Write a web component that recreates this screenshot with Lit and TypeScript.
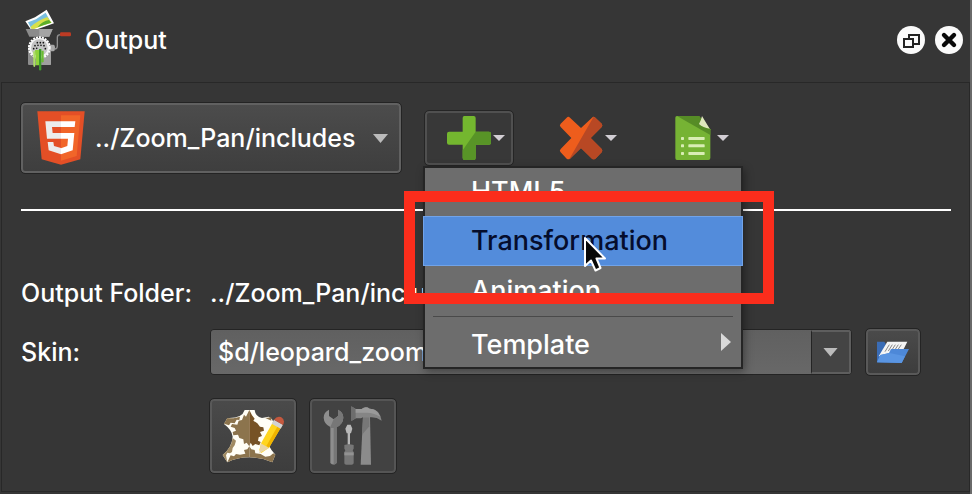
import { LitElement, html, css } from "lit";
import { customElement, property, state } from "lit/decorators.js";

const grinderIcon = html`<svg class="icon" width="48" height="64" viewBox="72 24 144 192" aria-hidden="true">
  <path d="M76 64 L105 52 L140 29 L162 70 L133 80 L96 93 Z" fill="#fff"/>
  <path d="M84 67 L108 58 L137 38 L150 62 L122 76 L94 86 Z" fill="#79bfe0"/>
  <path d="M91 81 Q112 62 142 51 L155 68 L130 76 L97 89 Z" fill="#d8e04a"/>
  <path d="M112 82 Q128 62 147 60 L154 68 L130 76 Z" fill="#5cae2b"/>
  <path d="M77 87 H158 L148 110 H88 Z" fill="#8b8b8b"/>
  <path d="M118 87 H158 L148 110 H118 Z" fill="#a4a4a4"/>
  <rect x="84" y="136" width="69" height="59" rx="3" fill="#8d8d8d"/>
  <rect x="118" y="136" width="35" height="59" rx="3" fill="#a0a0a0"/>
  <path d="M148 134 H160 Q165 134 165 144 Q165 154 160 154 H148 Z" fill="#a8a8a8"/>
  <path d="M164 147 Q172 147 172 138 V112 Q172 104 182 104" fill="none" stroke="#8e8e8e" stroke-width="4"/>
  <rect x="180" y="97" width="33" height="12" rx="4" fill="#bd3b24"/>
  <circle cx="118" cy="143" r="31" fill="none" stroke="#fff" stroke-width="6" stroke-dasharray="6 3"/>
  <circle cx="118" cy="143" r="30" fill="#f4f4f4"/>
  <circle cx="118" cy="143" r="25" fill="#c4c4c4"/>
  <g fill="#111"><circle cx="112" cy="128" r="2.5"/><circle cx="121" cy="128" r="2.5"/><circle cx="130" cy="128" r="2.5"/>
  <circle cx="105" cy="137" r="2.5"/><circle cx="114" cy="136" r="2.5"/><circle cx="123" cy="136" r="2.5"/><circle cx="132" cy="137" r="2.5"/>
  <circle cx="101" cy="146" r="2.5"/><circle cx="110" cy="145" r="2.5"/><circle cx="136" cy="146" r="2.5"/></g>
  <path d="M100 154 H106 V198 Q103 204 100 198 Z" fill="#aee065"/>
  <path d="M105 150 H118 V196 H108 V188 Z" fill="#8fd33c"/>
  <path d="M117 147 H124 V208 Q120 216 117 208 Z" fill="#3e9c2b"/>
  <path d="M124 152 H131 V184 Q127 191 124 184 Z" fill="#6bbd32"/>
</svg>`;

const floatIcon = html`<svg class="icon" width="28" height="28" viewBox="0 0 28 28" aria-hidden="true">
  <circle cx="14" cy="14" r="14" fill="#fafafa"/>
  <rect x="12" y="9" width="10" height="9" fill="none" stroke="#222" stroke-width="2"/>
  <rect x="7" y="13" width="9" height="8" fill="#fafafa" stroke="#222" stroke-width="2"/>
</svg>`;

const closeIcon = html`<svg class="icon" width="28" height="28" viewBox="0 0 28 28" aria-hidden="true">
  <circle cx="14" cy="14" r="14" fill="#fafafa"/>
  <path d="M9 9 L19 19 M19 9 L9 19" stroke="#080808" stroke-width="4.4" stroke-linecap="round"/>
</svg>`;

const html5Icon = html`<svg class="icon shield" width="48" height="54" viewBox="0 0 144 160" aria-hidden="true">
  <path d="M1 0 H143 L130 144 L72 160 L14 144 Z" fill="#e44f26"/>
  <path d="M72 12 H130 L119 134 L72 148 Z" fill="#f16529"/>
  <path d="M72 30 H25 L30 82 H72 V65 H47 L45 47 H72 Z M72 110 L51 104 L49 92 H32 L35 117 L72 129 Z" fill="#ececec"/>
  <path d="M72 30 H115 L113 47 H72 Z M72 65 H112 L107 117 L72 129 V111 L91 104 L93 82 H72 Z" fill="#fff"/>
</svg>`;

const plusIcon = html`<svg class="icon" width="44" height="44" viewBox="0 0 132 132" aria-hidden="true">
  <path d="M52 0 H80 Q86 0 86 6 V47 H126 Q132 47 132 53 V80 Q132 86 126 86 H86 V126 Q86 132 80 132 H53 Q47 132 47 126 V86 H6 Q0 86 0 80 V53 Q0 47 6 47 H47 V6 Q47 0 52 0 Z" fill="#74b72f"/>
  <path d="M86 47 H126 Q132 47 132 53 V80 Q132 86 126 86 H86 V126 Q86 132 80 132 H53 Q47 132 47 126 V103 Z" fill="#589427"/>
</svg>`;

const crossIcon = html`<svg class="icon" width="44" height="44" viewBox="2 2 132 132" aria-hidden="true">
  <path d="M7 25 L25 7 Q30 2 35 7 L68 38 L101 7 Q106 2 111 7 L130 25 Q134 30 130 35 L97 68 L130 101 Q134 106 130 111 L111 130 Q106 134 101 130 L68 98 L35 130 Q30 134 25 130 L7 111 Q2 106 7 101 L39 68 L7 35 Q2 30 7 25 Z" fill="#ee5d1c"/>
  <path d="M106 4 Q108 4 111 7 L130 25 Q134 30 130 35 L97 68 L130 101 Q134 106 130 111 L111 130 Q106 134 101 130 L68 98 L35 130 L33 131 Z" fill="#b84824"/>
</svg>`;

const documentIcon = html`<svg class="icon" width="44" height="44" viewBox="0 0 132 132" aria-hidden="true">
  <path d="M18 0 H84 L118 40 V126 Q118 132 112 132 H18 Q13 132 13 126 V5 Q13 0 18 0 Z" fill="#76b334"/>
  <path d="M18 0 H84 L118 40 V57 Z" fill="#568c26"/>
  <path d="M93 0 L116 38 Q96 35 84 24 Q90 14 93 0 Z" fill="#dfe8bd"/>
  <g fill="#d9edb4"><rect x="30" y="63" width="9" height="9" rx="2"/><rect x="52" y="63" width="49" height="9" rx="2"/>
  <rect x="30" y="85" width="9" height="9" rx="2"/><rect x="52" y="85" width="49" height="9" rx="2"/>
  <rect x="30" y="108" width="9" height="9" rx="2"/><rect x="52" y="108" width="49" height="9" rx="2"/></g>
</svg>`;

const folderIcon = html`<svg class="icon" width="32" height="22" viewBox="0 0 96 66" aria-hidden="true">
  <path d="M0 2 H22 L26 8 V64 H0 Z" fill="#3a6cb5"/>
  <path d="M5 46 L31 2 H91 L72 40 Z" fill="#f4f4f4"/>
  <path d="M37 11 L24 32 M46 11 L34 30 M55 11 L44 28 M64 11 L54 26 M73 11 L64 24" stroke="#888" stroke-width="3"/>
  <path d="M0 64 L10 42 L36 36 L42 24 H96 L74 66 Z" fill="#4d88d8"/>
  <path d="M0 64 L10 42 L38 36 L84 46 L74 66 Z" fill="#5a95e2"/>
</svg>`;

const leatherIcon = html`<svg class="icon" width="63" height="56" viewBox="66 66 189 168" aria-hidden="true">
  <path d="M134 72 H164 Q166 92 186 96 L206 92 L216 100 L226 120 Q204 132 198 150 Q200 178 226 206 L217 229 Q184 214 148 214 Q112 214 82 229 L68 207 Q96 184 98 152 Q96 132 72 114 L82 96 Q126 98 134 72 Z" fill="#fffef6"/>
  <path d="M82 96 Q96 98 108 95 L120 92 L118 102 L110 101 L104 112 L92 110 L87 118 L72 113 Z" fill="#8c744d"/>
  <path d="M132 86 L138 92 L142 84 L148 72 V181 L140 170 L132 174 L130 160 L118 156 L114 146 L100 148 L98 138 L108 134 L104 126 L92 122 L96 114 L112 116 L116 104 L126 102 Z" fill="#8c744d"/>
  <path d="M148 72 L156 88 L164 98 L160 104 L172 112 L180 122 L190 124 L192 134 L180 138 L186 150 L176 154 L174 164 L182 168 L178 178 L166 174 L158 180 L152 170 L148 181 Z" fill="#765225"/>
  <path d="M98 156 L108 164 L104 178 L98 186 L96 198 L90 202 L82 200 L78 208 L82 229 L68 207 Q94 186 98 156 Z" fill="#a08a62"/>
  <path d="M148 181 L142 190 L132 192 L136 203 L120 206 L108 204 L102 211 L92 208 L82 229 Q112 214 148 214 Z" fill="#8c744d"/>
  <path d="M148 181 L154 190 L164 192 L166 202 L182 204 L196 212 L210 210 L220 202 L226 206 L217 229 Q184 214 148 214 Z" fill="#8c744d"/>
  <path d="M196 96 L214 94 L214 104 Z" fill="#8c744d"/>
  <path d="M178 192 L184 170 L219 108 L244 122 L207 185 L184 201 Z" fill="#ffd51f"/>
  <path d="M207 185 L244 122 L235 117 L199 180 Z" fill="#f0b400"/>
  <path d="M178 202 L182 172 L207 186 Z" fill="#e9d5a6"/>
  <path d="M215 113 L222 101 L249 116 L242 128 Z" fill="#d3d3d3"/>
  <path d="M222 101 Q230 89 243 93 Q257 101 249 117 Z" fill="#c4583e"/>
</svg>`;

const toolsIcon = html`<svg class="icon" width="60" height="60" viewBox="70 64 180 180" aria-hidden="true">
  <path d="M88 75 Q72 82 72 99 Q73 118 92 127 V235 Q101 244 111 235 V127 Q130 119 131 99 Q131 82 115 75 V94 L102 104 L88 94 Z" fill="#8e8e8e"/>
  <path d="M102 104 L115 94 V75 Q131 82 131 99 Q130 119 111 127 V235 Q106 240 102 240 V130 H92 V127 Z" fill="#777"/>
  <path d="M143 120 H153 L158 132 L154 146 H151 V180 H144 V146 H141 L137 132 Z" fill="#b8b8b8"/>
  <path d="M134 181 Q148 176 162 181 V192 L159 197 L162 203 V236 Q161 240 156 240 H140 Q134 240 134 236 V203 L137 197 L134 192 Z" fill="#777"/>
  <path d="M134 203 H162 V212 H134 Z" fill="#929292"/>
  <path d="M190 96 H211 L214 240 H183 Z" fill="#8b8b8b"/>
  <path d="M190 98 H209 V125 L187 150 Z" fill="#777"/>
  <path d="M155 65 L168 73 H186 Q198 63 210 72 Q239 71 246 108 Q229 96 211 98 H190 L184 101 H169 L155 109 Z" fill="#858585"/>
  <path d="M155 65 L168 73 V101 L155 109 Z" fill="#6d6d6d"/>
  <path d="M168 73 H186 Q198 63 210 72 Q232 72 242 96 Q220 84 202 84 H168 Z" fill="#9a9a9a"/>
</svg>`;

const pointerIcon = html`<svg class="icon" width="24" height="37" viewBox="0 0 24 37" aria-hidden="true">
  <path d="M2 2 V30 L8 24.500 L12.500 34.500 L17.500 32 L13.500 22.500 H22 Z" fill="#080808" stroke="#fff" stroke-width="2" stroke-linejoin="round"/>
</svg>`;

const shared = css`
  * { box-sizing: border-box; }
  button, select, input { font: inherit; color: inherit; margin: 0; }
  .icon { display: block; flex: none; }
`;

@customElement("drop-menu")
class DropMenu extends LitElement {
  static styles = [shared, css`
    :host { display: block; font-size: 27px; }
    .menu {
      background: #6d6d6d; border: 2px solid #252525; box-shadow: 2px 3px 8px rgba(0, 0, 0, .35);
    }
    .item {
      display: flex; align-items: center; justify-content: space-between; width: 100%; height: 50px;
      padding: 0 10px 0 46px; border: 0; background: none; color: #fff; text-align: left;
    }
    .item:first-child { height: 48px; }
    .item.current {
      width: calc(100% + 4px); margin: 0 -2px; padding-left: 47px;
      background: #538cdb; color: #050d2c; border: 1px solid #71a3e8;
    }
    .item.parent { padding-top: 6px; }
    .rule { height: 1px; margin: 0 8px; border: 0; background: #4a4a4a; }
    .more { width: 10px; height: 18px; margin-bottom: 6px; background: #d9d9d9; clip-path: polygon(0 0, 100% 50%, 0 100%); }
  `];
  @property({ type: Array }) items: string[] = [];
  @property() current = "";

  render() {
    return html`<div class="menu" role="menu">
      ${this.items.map(name => html`<button role="menuitem" class="item ${name === this.current ? "current" : ""}">${name}</button>`)}
      <hr class="rule">
      <button role="menuitem" aria-haspopup="true" class="item parent">Template<span class="more"></span></button>
    </div>`;
  }
}

@customElement("app-root")
class AppRoot extends LitElement {
  static styles = [shared, css`
    :host {
      display: flex; flex-direction: column; box-sizing: border-box; min-height: 100vh;
      font-family: Inter, "Liberation Sans", sans-serif; font-size: 25px; font-weight: 500; line-height: 32px;
      color: #fff; background: #363636; border-right: 2px solid #6a6a6a;
    }
    .head { display: flex; align-items: center; gap: 13px; height: 82px; padding: 0 7px 2px 24px; }
    .title { flex: 1; margin: 0; font-size: inherit; font-weight: inherit; }
    .head-actions { display: flex; gap: 10px; }
    .round { display: flex; padding: 0; border: 0; border-radius: 50%; background: none; }
    .body { flex: 1; margin: 0 0 2px 1px; padding: 20px 18px 17px 19px; border: 1px solid #282828; }
    .bar { display: flex; align-items: center; gap: 24px; height: 70px; }
    .format { position: relative; width: 380px; }
    .format .shield { position: absolute; left: 16px; top: 8px; pointer-events: none; }
    .format .arrow { position: absolute; right: 13px; top: 31px; pointer-events: none; }
    .format-select {
      appearance: none; display: block; width: 100%; height: 70px; padding: 0 32px 0 72px;
      border: 2px solid #616161; outline: 1px solid #242424; border-radius: 4px;
      background: linear-gradient(#4c4c4c, #3e3e3e);
    }
    .arrow { flex: none; width: 15px; height: 9px; background: #bbb; clip-path: polygon(0 0, 100% 0, 50% 100%); }
    .arrow.small { width: 12px; height: 6px; background: #d2ced4; }
    .adder { position: relative; }
    .tool {
      display: flex; align-items: center; gap: 2px; width: 88px; height: 54px; padding: 0 6px 0 20px;
      border: 2px solid transparent; border-radius: 4px; background: none;
    }
    .tool.open { border-color: #505050; outline: 1px solid #252525; background: #383838; }
    .popup { position: absolute; z-index: 1; left: -2px; top: 55px; width: 320px; }
    .callout {
      position: absolute; z-index: 2; left: -21px; top: 80px; width: 370px; height: 113px;
      border: 11px solid #fb2d1c; pointer-events: none;
    }
    .pointer { position: absolute; z-index: 3; left: 158px; top: 125px; pointer-events: none; }
    .divider { height: 2px; margin: 36px 0 0; border: 0; background: #fff; }
    .form {
      display: grid; grid-template-columns: 189px minmax(0, 1fr); row-gap: 20px; align-items: center; padding: 66px 31px 0 0;
    }
    .row { display: flex; gap: 14px; }
    .combo {
      flex: 1; display: flex; min-width: 0; height: 46px; border: 1px solid #242424; border-radius: 4px; overflow: hidden;
    }
    .text { flex: 1; min-width: 0; padding: 0 7px; border: 0; background: linear-gradient(#606060, #686868); }
    .drop {
      display: flex; align-items: center; justify-content: center; width: 40px; padding: 0;
      border: 2px solid #5e5e5e; border-left: 1px solid #242424; background: #444;
    }
    .square {
      display: flex; align-items: center; justify-content: center; width: 54px; height: 46px; padding: 0;
      border: 2px solid #595959; outline: 1px solid #242424; border-radius: 4px; background: linear-gradient(#4a4a4a, #3d3d3d);
    }
    .square.large { width: 86px; height: 74px; }
    .square.off { border-color: #555; background: #424242; }
    .extras { grid-column: 2; display: flex; gap: 14px; padding-top: 4px; }
  `];
  @state() folder = "../Zoom_Pan/includes";

  render() {
    return html`
      <header class="head">
        ${grinderIcon}
        <h1 class="title">Output</h1>
        <div class="head-actions">
          <button class="round" aria-label="Float panel">${floatIcon}</button>
          <button class="round" aria-label="Close panel">${closeIcon}</button>
        </div>
      </header>
      <main class="body">
        <div class="bar">
          <div class="format">
            <select class="format-select" aria-label="Output format"><option>${this.folder}</option></select>
            ${html5Icon}<span class="arrow"></span>
          </div>
          <div class="adder">
            <button class="tool open" aria-label="Add output" aria-haspopup="menu">${plusIcon}<span class="arrow small"></span></button>
            <drop-menu class="popup" .items=${["HTML5", "Transformation", "Animation"]} current="Transformation"></drop-menu>
            <div class="callout"></div>
            <div class="pointer">${pointerIcon}</div>
          </div>
          <button class="tool" aria-label="Remove output">${crossIcon}<span class="arrow small"></span></button>
          <button class="tool" aria-label="Templates">${documentIcon}<span class="arrow small"></span></button>
        </div>
        <hr class="divider">
        <div class="form">
          <span>Output Folder:</span>
          <output>${this.folder}</output>
          <label for="skin">Skin:</label>
          <div class="row">
            <div class="combo">
              <input class="text" id="skin" type="text" value="$d/leopard_zoom">
              <button class="drop" aria-label="Choose skin"><span class="arrow"></span></button>
            </div>
            <button class="square" aria-label="Open skin folder">${folderIcon}</button>
          </div>
          <div class="extras">
            <button class="square large" aria-label="Edit skin">${leatherIcon}</button>
            <button class="square large off" aria-label="Skin tools">${toolsIcon}</button>
          </div>
        </div>
      </main>`;
  }
}
